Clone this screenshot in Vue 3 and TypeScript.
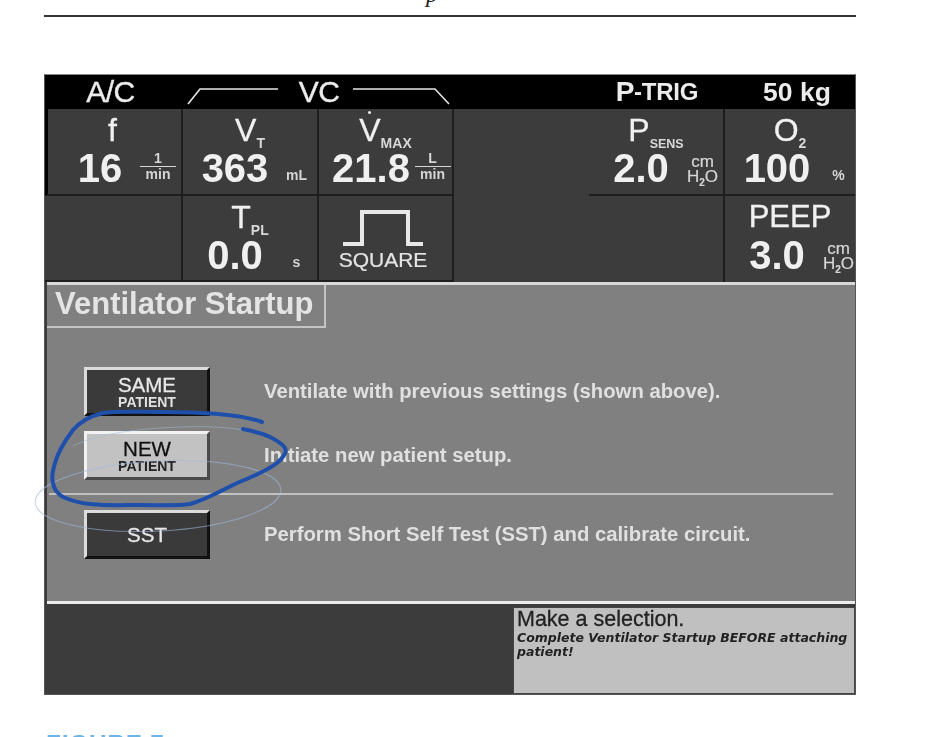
<template>
  <div class="page">
    <div class="running-head"><span>p</span></div>
    <div class="rule"></div>

    <div class="screen">
      <div class="mode-bar">
        <div class="mode a-c">A/C</div>
        <div class="mode vc">
          <svg class="bracket" viewBox="0 0 264 26" fill="none" stroke="#e6e6e6" stroke-width="1.6">
            <path d="M1 24 L13 9 H91" />
            <path d="M166 9 H248 L262 24" />
          </svg>
          <span>VC</span>
        </div>
        <div class="mode"></div>
        <div class="mode p-trig">P<small>-TRIG</small></div>
        <div class="mode weight">50 kg</div>
      </div>

      <div class="settings">
        <div
          v-for="cell in cells"
          :key="cell.id"
          class="cell"
          :class="[cell.id, { tall: cell.tall, boxed: cell.boxed, edge: cell.edge }]"
        >
          <template v-if="cell.id === 'square'">
            <svg class="wave" viewBox="0 0 80 36" fill="none" stroke="#e8e8e8" stroke-width="4">
              <path d="M0 34 H19 V2 H65 V34 H80" />
            </svg>
            <div class="wave-name">SQUARE</div>
          </template>
          <template v-else-if="cell.value">
            <div class="label">
              <span class="label-main" :class="{ 'v-dot': cell.dot }">{{ cell.label }}</span><sub v-if="cell.sub">{{ cell.sub }}</sub>
            </div>
            <div class="reading">
              <span class="value">{{ cell.value }}</span>
              <span v-if="cell.unit === 'per-min'" class="fraction"><i>1</i><b>min</b></span>
              <span v-else-if="cell.unit === 'l-min'" class="fraction"><i>L</i><b>min</b></span>
              <span v-else-if="cell.unit === 'h2o'" class="water">cm<br />H<sub>2</sub>O</span>
              <span v-else class="unit">{{ cell.unit }}</span>
            </div>
          </template>
        </div>
      </div>

      <div class="panel">
        <div class="tab">Ventilator Startup</div>
        <div class="options">
          <template v-for="opt in options" :key="opt.id">
            <div v-if="opt.id === 'sst'" class="divider"></div>
            <div class="option" :class="opt.id">
              <button class="soft-key" :class="{ selected: opt.selected }">
                {{ opt.title }}<small v-if="opt.small">{{ opt.small }}</small>
              </button>
              <span class="option-text">{{ opt.text }}</span>
            </div>
          </template>
        </div>
      </div>

      <div class="footer">
        <div class="message">
          <div class="message-title">Make a selection.</div>
          <div class="message-note">Complete Ventilator Startup BEFORE attaching patient!</div>
        </div>
      </div>
    </div>

    <div class="caption">FIGURE 7</div>

    <!-- pen marks on top of the photo -->
    <svg class="pen" viewBox="0 0 935 737" fill="none">
      <ellipse cx="158" cy="496" rx="123" ry="35" transform="rotate(-3 158 496)" stroke="#9dbbe0" stroke-width="1" opacity="0.6" />
      <path d="M73 446 C100 432 150 428 180 427 C205 426 225 427 243 430" stroke="#9dbbe0" stroke-width="1" opacity="0.5" />
      <path
        d="M262 422 C240 414 200 412 163 412 C135 412 115 411 103 413 C90 416 80 422 73 430 C64 442 58 452 55 463 C52 473 52 480 53 483 C54 490 58 494 63 497 C72 501 80 503 90 504 C110 506 125 505 140 505 C160 505 178 506 190 504 C208 499 222 490 237 483 C252 477 268 470 277 463 C284 457 287 452 285 448 C282 443 276 440 270 437 C262 433 252 431 243 429"
        stroke="#1d4fab"
        stroke-width="4"
        stroke-linecap="round"
      />
    </svg>
  </div>
</template>

<script setup lang="ts">
interface Cell {
  id: string;
  label?: string;
  sub?: string;
  value?: string;
  unit?: string;
  dot?: boolean;
  tall?: boolean;
  boxed?: boolean;
  edge?: boolean;
}

interface Option {
  id: string;
  title: string;
  small?: string;
  text: string;
  selected?: boolean;
}

const cells: Cell[] = [
  { id: 'f', label: 'f', value: '16', unit: 'per-min', boxed: true },
  { id: 'vt', label: 'V', sub: 'T', value: '363', unit: 'mL', boxed: true },
  { id: 'vmax', label: 'V', sub: 'MAX', value: '21.8', unit: 'l-min', dot: true, boxed: true },
  { id: 'empty1', tall: true },
  { id: 'psens', label: 'P', sub: 'SENS', value: '2.0', unit: 'h2o', boxed: true },
  { id: 'o2', label: 'O', sub: '2', value: '100', unit: '%', boxed: true },
  { id: 'empty2', boxed: true },
  { id: 'tpl', label: 'T', sub: 'PL', value: '0.0', unit: 's', boxed: true },
  { id: 'square', boxed: true },
  { id: 'empty3', edge: true },
  { id: 'peep', label: 'PEEP', value: '3.0', unit: 'h2o' },
];

const options: Option[] = [
  { id: 'same', title: 'SAME', small: 'PATIENT', text: 'Ventilate with previous settings (shown above).' },
  { id: 'new', title: 'NEW', small: 'PATIENT', text: 'Initiate new patient setup.', selected: true },
  { id: 'sst', title: 'SST', text: 'Perform Short Self Test (SST) and calibrate circuit.' },
];
</script>

<style>
html,
body {
  margin: 0;
  background: #fff;
  overflow: hidden;
}
</style>

<style scoped>
.page {
  position: relative;
  width: 935px;
  height: 737px;
  overflow: hidden;
  background: #fff;
  font-family: "Liberation Sans", Arial, sans-serif;
}

.running-head {
  height: 15px;
  overflow: hidden;
  padding-left: 426px;
  font-family: "Liberation Serif", serif;
  font-style: italic;
  font-size: 24px;
  line-height: 0;
  color: #222;
}

.running-head span {
  display: block;
  margin-top: -6px;
}

.rule {
  height: 2px;
  margin: 0 79px 57px 44px;
  background: #333;
}

.screen {
  width: 812px;
  height: 621px;
  margin-left: 44px;
  box-sizing: border-box;
  display: flex;
  flex-direction: column;
  background: #3c3c3c;
  border: 1px solid #555;
  border-top-color: #888;
  filter: blur(0.45px);
}

.mode-bar {
  display: grid;
  grid-template-columns: 138px 272px 134px 136px 1fr;
  height: 34px;
  background: #000;
  color: #ececec;
}

.mode {
  display: flex;
  align-items: center;
  justify-content: center;
  font-size: 27px;
  letter-spacing: -0.5px;
}

.a-c {
  padding-right: 7px;
  font-size: 30px;
  -webkit-text-stroke: 0.4px #ececec;
}

.vc {
  position: relative;
  font-size: 30px;
  -webkit-text-stroke: 0.4px #ececec;
}

.bracket {
  position: absolute;
  left: 4px;
  top: 5px;
  width: 264px;
  height: 26px;
}

.p-trig {
  font-weight: bold;
  font-size: 28px;
}

.p-trig small {
  font-size: 24px;
  letter-spacing: -0.2px;
}

.weight {
  font-weight: bold;
  font-size: 26.5px;
  letter-spacing: 0;
  padding-left: 14px;
}

.settings {
  display: grid;
  grid-template-columns: 138px 136px 135px 135px 136px 1fr;
  grid-template-rows: 87px 86px;
  background: #3c3c3c;
}

.cell {
  box-sizing: border-box;
  display: flex;
  flex-direction: column;
  align-items: center;
  color: #f0f0f0;
  overflow: hidden;
}

.cell.boxed {
  border-right: 2px solid #1e1e1e;
  border-bottom: 2px solid #1e1e1e;
}

.cell.f {
  border-left: 3px solid #000;
}

.cell.o2 {
  border-right: 0;
}

.cell.tall {
  grid-row: span 2;
}

.cell.edge {
  border-right: 2px solid #1e1e1e;
}

.cell.square {
  padding-right: 5px;
}

.label {
  height: 34px;
  margin-top: 4px;
  line-height: 34px;
  white-space: nowrap;
  font-size: 32px;
  -webkit-text-stroke: 0.3px #f0f0f0;
}

.f .label {
  margin-right: 4px;
}

.peep .label {
  font-size: 31px;
}

.label sub {
  font-size: 14px;
  font-weight: bold;
  vertical-align: -7px;
  line-height: 0;
  color: #d8d8d8;
  -webkit-text-stroke: 0;
}

.psens .label sub {
  font-size: 12.5px;
}

.v-dot {
  position: relative;
}

.v-dot::before {
  content: "";
  position: absolute;
  left: 9px;
  top: -1px;
  width: 3px;
  height: 3px;
  border-radius: 50%;
  background: #f0f0f0;
}

.reading {
  display: grid;
  grid-template-columns: 104px 40px;
  width: 100%;
  align-items: end;
}

.value {
  text-align: center;
  font-size: 40px;
  line-height: 42px;
  font-weight: bold;
  white-space: nowrap;
}

.unit,
.fraction,
.water {
  margin-left: -21px;
  text-align: center;
  font-weight: bold;
  font-size: 14px;
  color: #d6d6d6;
}

.unit {
  padding-bottom: 6px;
}

.fraction {
  display: flex;
  flex-direction: column;
  align-items: center;
  padding-bottom: 7px;
}

.f .fraction {
  margin-left: -28px;
}

.fraction i {
  width: 36px;
  font-style: normal;
  line-height: 15px;
  border-bottom: 1px solid #d6d6d6;
}

.fraction b {
  line-height: 15px;
}

.water {
  font-weight: normal;
  font-size: 17px;
  line-height: 15px;
  padding-bottom: 5px;
  -webkit-text-stroke: 0.2px #d6d6d6;
}

.water sub {
  font-size: 10px;
  font-weight: bold;
  line-height: 0;
}

.wave {
  width: 80px;
  height: 36px;
  margin-top: 14px;
}

.wave-name {
  margin-top: 1px;
  font-size: 21px;
  line-height: 26px;
  color: #e4e4e4;
  -webkit-text-stroke: 0.2px #e4e4e4;
}

.panel {
  flex: 1;
  box-sizing: border-box;
  margin: 0 0 0 2px;
  background: #808080;
  border-top: 3px solid #d8d8d8;
  border-bottom: 3px solid #ececec;
}

.tab {
  width: 279px;
  height: 43px;
  box-sizing: border-box;
  padding-left: 8px;
  line-height: 38px;
  font-size: 31px;
  font-weight: bold;
  color: #e4e4e4;
  border-right: 2px solid #c4c4c4;
  border-bottom: 2px solid #c4c4c4;
  white-space: nowrap;
}

.options {
  padding: 39px 22px 0 37px;
}

.option {
  display: flex;
  align-items: center;
  gap: 54px;
}

.option.new {
  margin-top: 15px;
}

.soft-key {
  width: 126px;
  height: 49px;
  box-sizing: border-box;
  padding: 0;
  display: flex;
  flex-direction: column;
  align-items: center;
  justify-content: center;
  font-family: inherit;
  font-size: 20.5px;
  line-height: 20px;
  color: #e8e8e8;
  -webkit-text-stroke: 0.3px currentColor;
  background: #3a3a3a;
  border: 3px solid;
  border-color: #dcdcdc #111 #111 #dcdcdc;
}

.soft-key small {
  font-size: 14px;
  line-height: 14px;
  font-weight: bold;
  color: #e0e0e0;
  -webkit-text-stroke: 0;
}

.soft-key.selected {
  background: #c2c2c2;
  color: #111;
  border-color: #f2f2f2 #4a4a4a #4a4a4a #f2f2f2;
}

.soft-key.selected small {
  color: #222;
}

.option-text {
  font-size: 20.3px;
  font-weight: bold;
  color: #e0e0e0;
  white-space: nowrap;
}

.divider {
  height: 2px;
  margin: 13px 0 15px -35px;
  background: #c0c0c0;
}

.footer {
  height: 90px;
  flex-shrink: 0;
  display: flex;
  justify-content: flex-end;
  padding-top: 3px;
  box-sizing: border-box;
  background: #3c3c3c;
}

.message {
  width: 342px;
  box-sizing: border-box;
  padding: 1px 3px;
  background: #c0c0c0;
  color: #222;
  border: 1px solid #444;
}

.message-title {
  font-size: 21.5px;
  line-height: 20px;
  -webkit-text-stroke: 0.3px #222;
}

.message-note {
  margin-top: 2px;
  font-family: "DejaVu Sans", Verdana, sans-serif;
  font-size: 12.5px;
  line-height: 14px;
  font-weight: bold;
  font-style: italic;
}

.caption {
  margin: 38px 0 0 46px;
  font-size: 24px;
  line-height: 22px;
  font-weight: bold;
  letter-spacing: 1px;
  color: #6db3e6;
}

.pen {
  position: absolute;
  left: 0;
  top: 0;
  width: 935px;
  height: 737px;
  pointer-events: none;
}
</style>
